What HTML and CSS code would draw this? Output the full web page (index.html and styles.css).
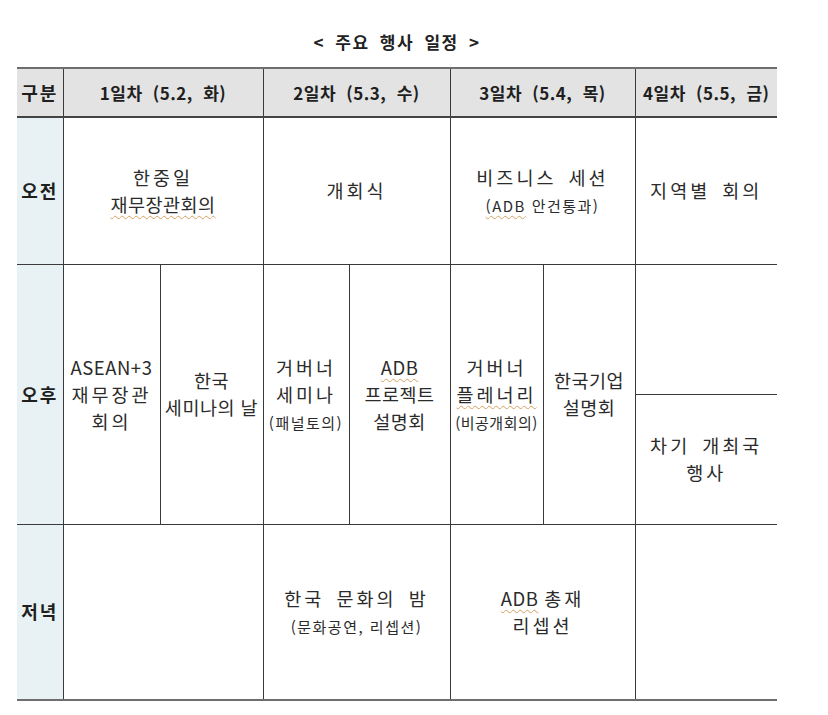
FILE: index.html
```html
<!DOCTYPE html>
<html lang="ko">
<head>
<meta charset="utf-8">
<title>주요 행사 일정</title>
<link rel="stylesheet" href="styles.css">
</head>
<body>
<div class="page">
  <h1 class="title">&lt; 주요 행사 일정 &gt;</h1>
  <table class="schedule">
    <colgroup>
      <col class="c-label">
      <col class="c-d1a">
      <col class="c-d1b">
      <col class="c-d2a">
      <col class="c-d2b">
      <col class="c-d3a">
      <col class="c-d3b">
      <col class="c-d4">
    </colgroup>
    <thead>
      <tr class="r-head">
        <th class="label">구분</th>
        <th colspan="2">1일차 (5.2, 화)</th>
        <th colspan="2">2일차 (5.3, 수)</th>
        <th colspan="2">3일차 (5.4, 목)</th>
        <th>4일차 (5.5, 금)</th>
      </tr>
    </thead>
    <tbody>
      <tr class="r-am">
        <td class="label">오전</td>
        <td colspan="2"><span class="sp">한중일</span><br><span class="typo">재무장관회의</span></td>
        <td colspan="2"><span class="sp">개회식</span></td>
        <td colspan="2"><span class="sp">비즈니스 세션</span><br><span class="small"><span class="typo">(ADB</span> 안건통과)</span></td>
        <td><span class="sp">지역별 회의</span></td>
      </tr>
      <tr class="r-pm1">
        <td class="label" rowspan="2">오후</td>
        <td rowspan="2">ASEAN+3<br><span class="sp">재무장관</span><br><span class="sp">회의</span></td>
        <td rowspan="2">한국<br>세미나의 날</td>
        <td rowspan="2"><span class="sp">거버너</span><br><span class="sp">세미나</span><br><span class="small">(패널토의)</span></td>
        <td rowspan="2"><span class="typo">ADB</span><br>프로젝트<br>설명회</td>
        <td rowspan="2"><span class="sp">거버너</span><br><span class="typo sp">플레너리</span><br><span class="small tight">(비공개회의)</span></td>
        <td rowspan="2">한국기업<br>설명회</td>
        <td></td>
      </tr>
      <tr class="r-pm2">
        <td><span class="sp">차기 개최국</span><br><span class="sp">행사</span></td>
      </tr>
      <tr class="r-pm">
        <td class="label">저녁</td>
        <td colspan="2"></td>
        <td colspan="2"><span class="sp">한국 문화의 밤</span><br><span class="small">(문화공연, 리셉션)</span></td>
        <td colspan="2"><span class="typo">ADB</span> <span class="sp">총재</span><br><span class="sp">리셉션</span></td>
        <td></td>
      </tr>
    </tbody>
  </table>
</div>
</body>
</html>
```

FILE: styles.css
```css
html, body {
  margin: 0;
  padding: 0;
  background: #ffffff;
}

body {
  font-family: "Noto Sans CJK KR", "Noto Sans", sans-serif;
  color: #2b2b2b;
}

.page {
  padding: 29px 0 0 17px;
}

.title {
  width: 760px;
  margin: 0 0 12px 0;
  font-size: 17px;
  line-height: 26px;
  font-weight: 700;
  text-align: center;
  color: #222;
  letter-spacing: 1.5px;
  word-spacing: 4px;
}

.schedule {
  width: 760px;
  border-collapse: collapse;
  table-layout: fixed;
  border-left: hidden;
  border-right: hidden;
  border-top: 2px solid #6e6e6e;
  border-bottom: 2px solid #6e6e6e;
}

.c-label { width: 46px; }
.c-d1a { width: 97px; }
.c-d1b { width: 103px; }
.c-d2a { width: 86px; }
.c-d2b { width: 101px; }
.c-d3a { width: 93px; }
.c-d3b { width: 92px; }
.c-d4 { width: 142px; }

.schedule th,
.schedule td {
  border: 1px solid #3a3a3a;
  padding: 0;
  text-align: center;
  vertical-align: middle;
  font-size: 18.5px;
  line-height: 27px;
  font-weight: 400;
  white-space: nowrap;
  letter-spacing: 0.5px;
}

.schedule th {
  background: #e3e3e3;
  color: #1f1f1f;
  font-weight: 700;
  font-size: 17px;
  letter-spacing: 0.5px;
  word-spacing: 5px;
  border-bottom: 2px solid #444;
}

.schedule .label {
  background: #e8f2f4;
  font-weight: 700;
  color: #1f1f1f;
  font-size: 18px;
  letter-spacing: 2px;
}

.schedule th.label {
  background: #e3e3e3;
}

.r-head { height: 49px; }
.r-am { height: 147px; }
.r-pm1 { height: 130px; }
.r-pm2 { height: 130px; }
.r-pm { height: 176px; }

.sp {
  letter-spacing: 3px;
  word-spacing: 4px;
}

.small {
  font-size: 15px;
  line-height: 24px;
  letter-spacing: 1.5px;
}

.small.tight {
  letter-spacing: 0.5px;
}

.typo {
  text-decoration: underline wavy #d7a060;
  text-decoration-thickness: 1px;
  text-underline-offset: 3px;
}
```
